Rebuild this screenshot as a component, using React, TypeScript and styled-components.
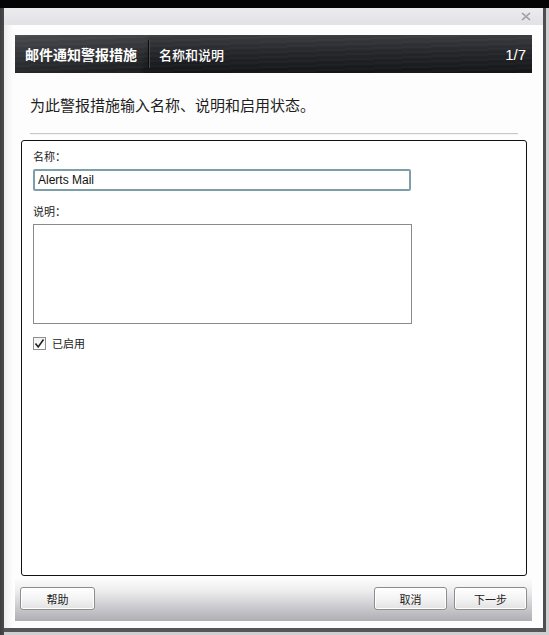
import React, { useState } from 'react'
import styled, { createGlobalStyle } from 'styled-components'

const GlobalStyle = createGlobalStyle`
  html, body {
    margin: 0;
    padding: 0;
    background: #2a2a2a;
  }
  body {
    font-family: "Noto Sans CJK SC", "Liberation Sans", sans-serif;
  }
`

const cjk = `"Noto Sans CJK SC", "Liberation Sans", sans-serif`

const Screen = styled.div`
  width: 549px;
  height: 635px;
  box-sizing: border-box;
  padding: 8px 3px 3px 4px;
  background: linear-gradient(to right, #3d3d3d 0, #4a4a4a 4px, #cfcfd2 4px);
  border-top: 0;
  position: relative;
  overflow: hidden;

  &::before {
    content: '';
    position: absolute;
    left: 0;
    right: 0;
    top: 0;
    height: 8px;
    background: #050505;
  }
`

const Window = styled.div`
  width: 100%;
  height: 100%;
  box-sizing: border-box;
  background: #fbfbfc;
  border-right: 3px solid #4e4e50;
  border-bottom: 4px solid #555557;
  display: flex;
  flex-direction: column;
`

const TitleStrip = styled.div`
  height: 17px;
  flex: none;
  background: linear-gradient(to bottom, #ececef, #e2e2e6);
  display: flex;
  justify-content: flex-end;
  align-items: center;
  padding-right: 12px;
`

const Body = styled.div`
  flex: 1;
  display: flex;
  flex-direction: column;
  padding: 10px 11px 7px 11px;
  background: linear-gradient(to right, #ececee 0, #fdfdfd 9px);
`

const Header = styled.div`
  height: 38px;
  flex: none;
  display: flex;
  align-items: center;
  color: #fff;
  font-family: ${cjk};
  background:
    linear-gradient(100deg, rgba(255, 255, 255, 0.08) 0, rgba(255, 255, 255, 0.03) 25%, rgba(255, 255, 255, 0) 26%),
    repeating-linear-gradient(178deg, rgba(255, 255, 255, 0.025) 0 2px, rgba(0, 0, 0, 0) 2px 5px),
    linear-gradient(to bottom, #3a3c40 0%, #26272a 45%, #141517 100%);
`

const HeaderTitle = styled.div`
  font-size: 14px;
  font-weight: 700;
  padding: 0 11px 0 10px;
  height: 28px;
  line-height: 28px;
  border-right: 1px solid #0c0c0c;
  box-shadow: 1px 0 0 #4a4b4e;
`

const HeaderStep = styled.div`
  font-size: 13px;
  font-weight: 500;
  padding-left: 10px;
  flex: 1;
`

const HeaderCount = styled.div`
  font-family: "Liberation Sans", sans-serif;
  font-size: 15px;
  padding-right: 6px;
`

const Subtitle = styled.div`
  font-family: ${cjk};
  font-size: 15px;
  color: #1e1e1e;
  margin: 22px 0 0 15px;
  line-height: 20px;
`

const Rule = styled.div`
  height: 1px;
  background: #c8c8ca;
  margin: 18px 14px 0 15px;
  box-shadow: 0 1px 0 #f4f4f4;
`

const Panel = styled.div`
  flex: 1;
  margin: 6px 5px 0 6px;
  border: 1px solid #111;
  border-radius: 3px;
  background: #fff;
  padding: 8px 11px;
  display: flex;
  flex-direction: column;
`

const Label = styled.div`
  font-family: ${cjk};
  font-size: 11px;
  color: #222;
  line-height: 14px;
  margin-bottom: 6px;
`

const NameInput = styled.input`
  width: 378px;
  height: 22px;
  box-sizing: border-box;
  border: 2px solid #7d9fa8;
  border-radius: 2px;
  padding: 0 3px;
  font-family: "Liberation Sans", sans-serif;
  font-size: 12px;
  color: #111;
  outline: none;
  margin-bottom: 13px;
  caret-color: #000;
`

const DescArea = styled.textarea`
  width: 379px;
  height: 100px;
  box-sizing: border-box;
  border: 1px solid #8a8a8a;
  resize: none;
  outline: none;
  margin: 0 0 11px 0;
  font-family: "Liberation Sans", sans-serif;
  font-size: 12px;
`

const CheckRow = styled.label`
  display: flex;
  align-items: center;
  gap: 6px;
  font-family: ${cjk};
  font-size: 11px;
  color: #222;
`

const CheckBox = styled.span`
  width: 13px;
  height: 13px;
  box-sizing: border-box;
  border: 1px solid #8e8f8f;
  background: linear-gradient(to bottom, #f2f2f2, #ffffff);
  display: flex;
  align-items: center;
  justify-content: center;
`

const Footer = styled.div`
  height: 43px;
  flex: none;
  margin-top: 2px;
  display: flex;
  align-items: center;
  padding: 0 5px 0 5px;
  gap: 7px;
  background: linear-gradient(to bottom, #fdfdfd 0%, #ededee 30%, #c9c9cd 70%, #aeaeb3 100%);
`

const Spacer = styled.div`
  flex: 1;
`

const Button = styled.button<{ $w: number }>`
  width: ${(p) => p.$w}px;
  height: 23px;
  margin-top: -2px;
  border: 1px solid #8d8d8f;
  border-radius: 3px;
  background: linear-gradient(to bottom, #ffffff 0%, #f4f4f4 50%, #e2e2e4 100%);
  font-family: ${cjk};
  font-size: 11px;
  color: #222;
  padding: 0;
  box-shadow: inset 0 0 0 1px #fff;
`

const CloseIcon = () => (
  <svg width="10" height="9" viewBox="0 0 10 9">
    <path d="M1 1 L9 8 M9 1 L1 8" stroke="#9a9a9e" strokeWidth="1.6" fill="none" />
    <path d="M2.5 1 L9 7 M7.5 1 L1 7" stroke="#c8c8cc" strokeWidth="0.6" fill="none" />
  </svg>
)

const App = () => {
  const [name, setName] = useState('Alerts Mail')
  const [enabled, setEnabled] = useState(true)

  return (
    <Screen>
      <GlobalStyle />
      <Window>
        <TitleStrip>
          <CloseIcon />
        </TitleStrip>
        <Body>
          <Header>
            <HeaderTitle>邮件通知警报措施</HeaderTitle>
            <HeaderStep>名称和说明</HeaderStep>
            <HeaderCount>1/7</HeaderCount>
          </Header>
          <Subtitle>为此警报措施输入名称、说明和启用状态。</Subtitle>
          <Rule />
          <Panel>
            <Label>名称：</Label>
            <NameInput value={name} onChange={(e) => setName(e.target.value)} autoFocus />
            <Label>说明：</Label>
            <DescArea />
            <CheckRow onClick={() => setEnabled(!enabled)}>
              <CheckBox>
                {enabled && (
                  <svg width="11" height="11" viewBox="0 0 11 11">
                    <path d="M1.5 5.5 L4.2 9 L9.5 1.5" stroke="#222" strokeWidth="1.6" fill="none" />
                  </svg>
                )}
              </CheckBox>
              已启用
            </CheckRow>
          </Panel>
          <Footer>
            <Button $w={75}>帮助</Button>
            <Spacer />
            <Button $w={73}>取消</Button>
            <Button $w={73}>下一步</Button>
          </Footer>
        </Body>
      </Window>
    </Screen>
  )
}

export default App
